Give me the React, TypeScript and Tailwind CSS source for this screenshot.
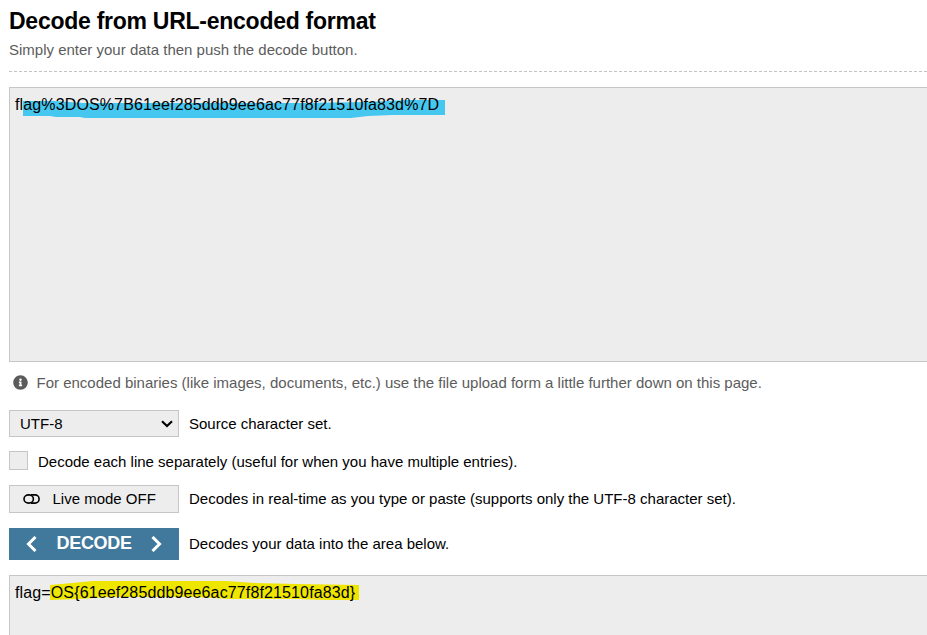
import React from "react";

function InfoIcon() {
  return (
    <svg className="-mt-[2px] h-[15px] w-[15px] shrink-0" viewBox="0 0 512 512" fill="#5c5c5c">
      <path d="M256 8C119 8 8 119.100 8 256c0 137 111 248 248 248s248-111 248-248C504 119.100 393 8 256 8zm0 110c23.200 0 42 18.800 42 42s-18.800 42-42 42-42-18.800-42-42 18.800-42 42-42zm56 254c0 6.600-5.400 12-12 12h-88c-6.600 0-12-5.400-12-12v-24c0-6.600 5.400-12 12-12h12v-64h-12c-6.600 0-12-5.400-12-12v-24c0-6.600 5.400-12 12-12h64c6.600 0 12 5.400 12 12v100h12c6.600 0 12 5.400 12 12v24z" />
    </svg>
  );
}

function Chevron({ d, className }: { d: string; className: string }) {
  return (
    <svg className={className} viewBox="0 0 12 16" fill="none" stroke="currentColor" strokeWidth="3">
      <path d={d} />
    </svg>
  );
}

export default function App() {
  return (
    <main className="flex h-[635px] w-[927px] flex-col overflow-hidden whitespace-nowrap bg-white pl-[9px] font-['Liberation_Sans',Arial,sans-serif] text-[15px] leading-5 text-black">
      <h1 className="mt-[7px] text-[23px] leading-7 font-bold tracking-[-0.26px]">Decode from URL-encoded format</h1>
      <p className="mt-[5px] text-[#5c5c5c]">Simply enter your data then push the decode button.</p>
      <svg className="mt-[11px] h-px w-full shrink-0" viewBox="0 0 918 1">
        <path d="M0 .5H918" stroke="#c3c3c3" strokeDasharray="3 2" />
      </svg>

      <div className="relative mt-[15px] h-[275px] w-[930px] shrink-0 border border-[#c6c6c6] bg-[#ededed] pt-[7px] pl-[5px] text-[16px] tracking-[0.13px]">
        <svg className="absolute top-[11px] left-[13px] h-[20px] w-[424px]" viewBox="0 0 424 20" fill="#46c7ef">
          <path d="M0 2H32L60 4H280L345 3L384 1H422V16H370L345 17L328 19H62L57 18H33L27 17H0Z" />
        </svg>
        <span className="relative">flag%3DOS%7B61eef285ddb9ee6ac77f8f21510fa83d%7D</span>
      </div>

      <div className="mt-[11px] flex items-center pl-[4px] text-[#5c5c5c]">
        <InfoIcon />
        <span className="ml-[8.500px]">For encoded binaries (like images, documents, etc.) use the file upload form a little further down on this page.</span>
      </div>

      <div className="mt-[17px] flex h-[27px] shrink-0 items-center">
        <div className="flex h-[27px] w-[170px] items-center justify-between border border-[#c6c6c6] bg-[#ededed] pr-[5px] pl-[10px]">
          <span>UTF-8</span>
          <svg className="h-[8px] w-[12px]" viewBox="0 0 12 8" fill="none" stroke="black" strokeWidth="2.2">
            <path d="M1 1.300L6 6L11 1.300" />
          </svg>
        </div>
        <span className="ml-[10px]">Source character set.</span>
      </div>

      <div className="mt-[14px] flex h-[19px] shrink-0 items-center">
        <span className="h-[19px] w-[19px] border border-[#c6c6c6] bg-[#ededed]" />
        <span className="ml-[10px] pt-[2px]">Decode each line separately (useful for when you have multiple entries).</span>
      </div>

      <div className="mt-[15px] flex h-[28px] shrink-0 items-center">
        <div className="flex h-[28px] w-[170px] items-center border border-[#c6c6c6] bg-[#ededed] pl-[13px]">
          <svg className="-mt-px h-[10px] w-[17px]" viewBox="0 0 17 10" fill="none" stroke="black" strokeWidth="1.6">
            <ellipse cx="5.700" cy="5" rx="4.700" ry="4.100" />
            <path d="M8 .9H12A4.100 4.100 0 0 1 12 9.100H8" />
          </svg>
          <span className="ml-[12.500px]">Live mode OFF</span>
        </div>
        <span className="ml-[10px]">Decodes in real-time as you type or paste (supports only the UTF-8 character set).</span>
      </div>

      <div className="mt-[15px] flex h-[32px] shrink-0 items-center">
        <div className="flex h-[32px] w-[170px] items-center bg-[#41799c] pl-[17px] text-white">
          <Chevron className="-mt-px h-[16px] w-[12px]" d="M9.500 1L2.500 8L9.500 15" />
          <span className="-mt-[2px] ml-[18.500px] w-[75px] text-[18px] leading-5 font-bold tracking-[-0.3px]">DECODE</span>
          <Chevron className="-mt-px ml-[18.500px] h-[16px] w-[12px]" d="M2.500 1L9.500 8L2.500 15" />
        </div>
        <span className="ml-[10px]">Decodes your data into the area below.</span>
      </div>

      <div className="relative mt-[15px] h-[80px] w-[930px] shrink-0 border border-[#c6c6c6] bg-[#ededed] pt-[7px] pl-[5px] text-[16px] tracking-[0.13px]">
        <svg className="absolute top-[3px] left-[40px] h-[24px] w-[312px]" viewBox="0 0 312 24" fill="#efe600">
          <path d="M0 6L22 4L43 2H176L205 4L246 5L309 6V21H276L246 20H180L145 18H60L30 20L0 21Z" />
        </svg>
        <span className="relative">flag=OS&#123;61eef285ddb9ee6ac77f8f21510fa83d&#125;</span>
      </div>
    </main>
  );
}
